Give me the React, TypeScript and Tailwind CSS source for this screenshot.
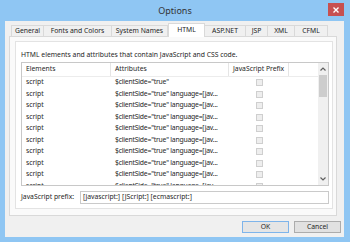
import React from 'react';

const rows = Array.from({ length: 10 }, (_, i) => ({
  id: i,
  element: 'script',
  attrs: i === 0 ? '$clientSide="true"' : '$clientSide="true" language=[jav...',
}));

const tabs = ['General', 'Fonts and Colors', 'System Names', 'HTML', 'ASP.NET', 'JSP', 'XML', 'CFML'];
const tabWidths = [33, 69, 57, 37, 42, 23, 28, 34];

const App: React.FC = () => {
  return (
    <div className="w-[350px] h-[242px] bg-[#8fc6f3] flex flex-col overflow-hidden text-[#1e1e1e] font-['Noto_Sans',sans-serif] text-[6.8px] leading-none">
      {/* Title bar */}
      <div className="h-[21px] flex items-center justify-center relative shrink-0">
        <span className="text-[9px] text-[#333] -mt-[1px]">Options</span>
        <div className="absolute right-[6px] top-[3px] w-[16px] h-[13px] bg-[#c75050] flex items-center justify-center">
          <svg width="6" height="6" viewBox="0 0 6 6">
            <path d="M0.5 0.5L5.5 5.5M5.5 0.5L0.5 5.5" stroke="#fff" strokeWidth="1.4" />
          </svg>
        </div>
      </div>

      {/* Client area */}
      <div className="flex-1 ml-[5px] mr-[6px] mb-[5px] bg-[#f0f0f0] flex flex-col">
        {/* Tab strip */}
        <div className="flex items-end h-[14px] pl-[6px] mt-[1px]">
          {tabs.map((t, i) => (
            <div
              key={t}
              style={{ width: tabWidths[i] }}
              className={
                t === 'HTML'
                  ? 'h-[14px] bg-white border border-b-0 border-[#d9d9d9] flex items-center justify-center -mb-[1px] relative z-10'
                  : 'h-[11px] bg-[#f0f0f0] border border-b-0 border-[#d9d9d9] flex items-center justify-center -ml-[1px] first:ml-0'
              }
            >
              {t}
            </div>
          ))}
        </div>

        {/* Tab page */}
        <div className="ml-[4px] w-[328px] h-[180px] border border-[#d9d9d9] bg-[#fafafa] pt-[4px] pl-[5px] pr-[3px] pb-[6px] flex">
          <div className="flex-1 bg-white border border-[#e3e3e3] pl-[5px] pr-[3px] flex flex-col">
            <div className="h-[19px] flex items-end pb-[2px]">HTML elements and attributes that contain JavaScript and CSS code.</div>

            {/* List */}
            <div className="mt-[1px] h-[124px] border border-[#c8c8c8] flex overflow-hidden">
              <div className="flex-1 flex flex-col">
                <div className="h-[14px] shrink-0 flex items-center border-b border-[#ececec]">
                  <div className="w-[89px] pl-[4px] border-r border-[#e5e5e5] h-full flex items-center">Elements</div>
                  <div className="w-[118px] pl-[4px] border-r border-[#e5e5e5] h-full flex items-center">Attributes</div>
                  <div className="w-[60px] pl-[4px] border-r border-[#e5e5e5] h-full flex items-center">JavaScript Prefix</div>
                </div>
                {rows.map((r) => (
                  <div key={r.id} className="h-[11.5px] shrink-0 flex items-center">
                    <div className="w-[89px] pl-[4px]">{r.element}</div>
                    <div className="w-[118px] pl-[4px] whitespace-nowrap tracking-[-0.2px]">{r.attrs}</div>
                    <div className="w-[60px] flex justify-center">
                      <div className="w-[7px] h-[7px] border border-[#cfcfcf] bg-[#eeeeee]" />
                    </div>
                  </div>
                ))}
              </div>

              {/* Scrollbar */}
              <div className="w-[10px] bg-[#f0f0f0] flex flex-col items-center">
                <div className="h-[12px] flex items-center justify-center">
                  <svg width="6" height="4" viewBox="0 0 6 4">
                    <path d="M0.5 3.5L3 1L5.5 3.5" stroke="#606060" strokeWidth="1.2" fill="none" />
                  </svg>
                </div>
                <div className="w-[8px] h-[22px] bg-[#cdcdcd]" />
                <div className="flex-1" />
                <div className="h-[12px] flex items-center justify-center">
                  <svg width="6" height="4" viewBox="0 0 6 4">
                    <path d="M0.5 0.5L3 3L5.5 0.5" stroke="#606060" strokeWidth="1.2" fill="none" />
                  </svg>
                </div>
              </div>
            </div>

            {/* Prefix field */}
            <div className="mt-[5px] flex items-center">
              <div className="w-[59px]">JavaScript prefix:</div>
              <div className="flex-1 h-[13px] border border-[#cacaca] bg-white flex items-center pl-[2px]">
                [javascript:] [JScript:] [ecmascript:]
              </div>
            </div>
          </div>
        </div>

        {/* Buttons */}
        <div className="flex justify-end gap-[5px] pr-[3px] mt-[5px]">
          <div className="w-[47px] h-[12px] border border-[#7eb4ea] bg-[#e5e5e5] flex items-center justify-center">OK</div>
          <div className="w-[47px] h-[12px] border border-[#acacac] bg-[#e1e1e1] flex items-center justify-center">Cancel</div>
        </div>
      </div>
    </div>
  );
};

export default App;
